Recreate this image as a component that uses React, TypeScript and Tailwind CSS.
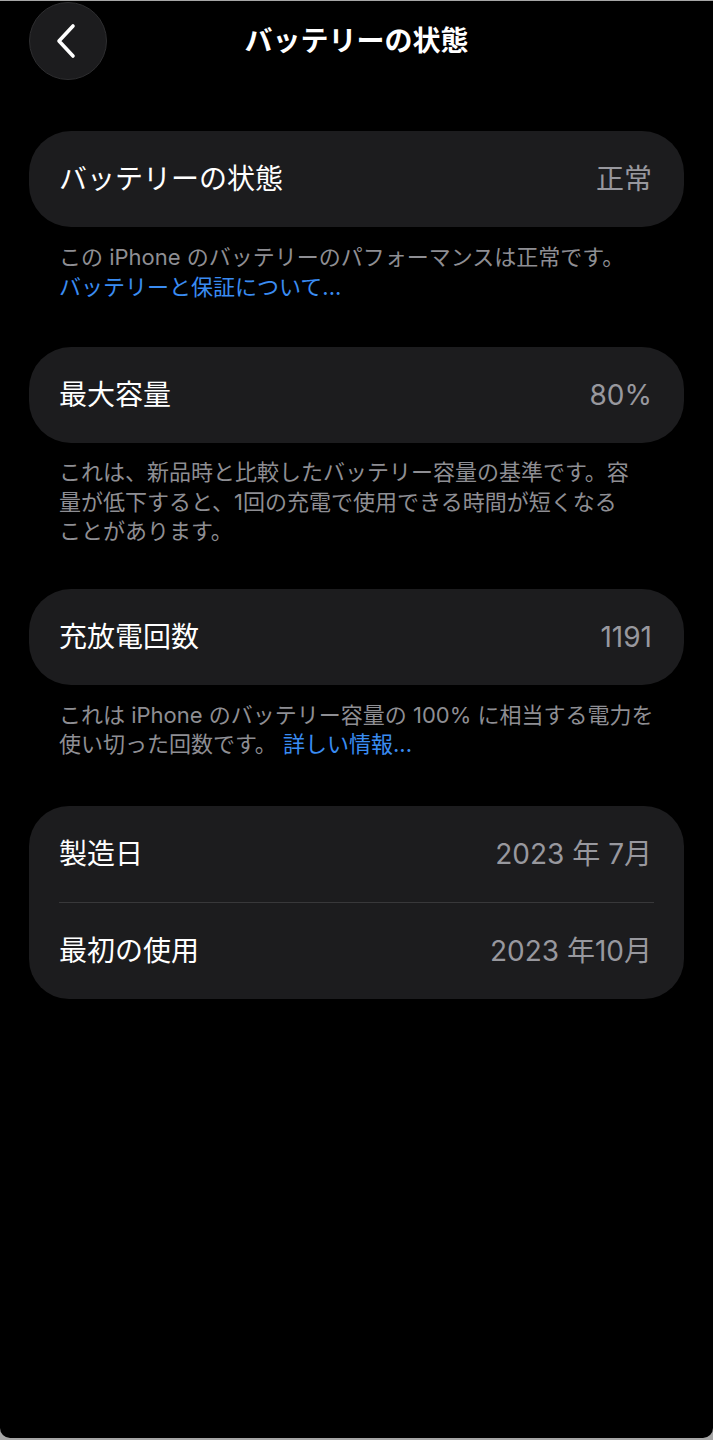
import React from 'react';

const font = { fontFamily: 'Inter, "Noto Sans CJK JP", "Noto Sans", sans-serif' };

const Row = ({ label, value }: { label: string; value: string }) => (
  <div className="flex h-[96px] items-center justify-between pl-[30px] pr-[32px]">
    <span className="text-[28px] text-white">{label}</span>
    <span className="text-[28px] text-[#98989e]">{value}</span>
  </div>
);

const Note = ({ children, className = '' }: { children: React.ReactNode; className?: string }) => (
  <div className={`px-[30px] text-[22px] leading-[29.5px] text-[#8e8e93] ${className}`}>{children}</div>
);

export default function App() {
  return (
    <div className="h-[1440px] w-[713px] bg-[#a6a6a6] pt-px pb-[2px]" style={font}>
      <div className="h-full rounded-b-[10px] bg-black px-[29px]">
        {/* Header */}
        <div className="grid h-[80px] grid-cols-[78px_1fr_78px] items-center">
          <button
            className="flex h-[78px] w-[78px] items-center justify-center rounded-full border border-[#2e2e30] bg-[#1c1c1e]"
            aria-label="戻る"
          >
            <svg width="22" height="36" viewBox="0 0 22 36" className="-ml-[4px]" fill="none">
              <path d="M18 3 L4 18 L18 33" stroke="white" strokeWidth="3.6" strokeLinecap="round" strokeLinejoin="round" />
            </svg>
          </button>
          <h1 className="text-center text-[28px] font-bold text-white">バッテリーの状態</h1>
          <div />
        </div>

        {/* Battery health */}
        <div className="mt-[50px] rounded-[42px] bg-[#1c1c1e]">
          <Row label="バッテリーの状態" value="正常" />
        </div>
        <Note className="mt-[16px]">
          <div>この iPhone のバッテリーのパフォーマンスは正常です。</div>
          <div className="text-[#3a8cf2]">バッテリーと保証について...</div>
        </Note>

        {/* Max capacity */}
        <div className="mt-[45px] rounded-[42px] bg-[#1c1c1e]">
          <Row label="最大容量" value="80%" />
        </div>
        <Note className="mt-[15px]">
          <div>これは、新品時と比較したバッテリー容量の基準です。容</div>
          <div>量が低下すると、1回の充電で使用できる時間が短くなる</div>
          <div>ことがあります。</div>
        </Note>

        {/* Cycle count */}
        <div className="mt-[42px] rounded-[42px] bg-[#1c1c1e]">
          <Row label="充放電回数" value="1191" />
        </div>
        <Note className="mt-[16px]">
          <div>これは iPhone のバッテリー容量の 100% に相当する電力を</div>
          <div>
            使い切った回数です。 <span className="text-[#3a8cf2]">詳しい情報...</span>
          </div>
        </Note>

        {/* Dates */}
        <div className="mt-[46px] rounded-[40px] bg-[#1c1c1e]">
          <Row label="製造日" value="2023 年 7月" />
          <div className="ml-[30px] mr-[30px] h-px bg-[#38383a]" />
          <Row label="最初の使用" value="2023 年10月" />
        </div>
      </div>
    </div>
  );
}
